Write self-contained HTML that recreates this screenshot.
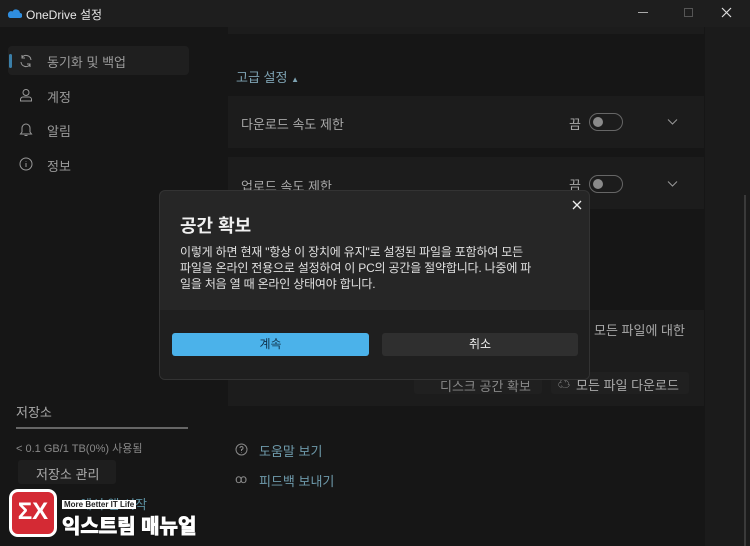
<!DOCTYPE html>
<html><head><meta charset="utf-8"><style>
*{margin:0;padding:0;box-sizing:border-box}
body{width:750px;height:546px;overflow:hidden;background:#161616;font-family:"Liberation Sans","Noto Sans CJK KR",sans-serif;color:#9a9a9a;position:relative}
.a{position:absolute}
.t{font-size:13px;white-space:nowrap}
</style></head><body>
<div class="a" style="left:0;top:0;width:750px;height:27px;background:#1e1e1e"></div>
<svg class="a" style="left:6px;top:7px" width="16" height="12" viewBox="0 0 16 12"><path d="M4 11h10a2.5 2.5 0 0 0 0-5 4 4 0 0 0-7.5-1.5A3.2 3.2 0 0 0 2 8a3 3 0 0 0 2 3z" fill="#2f8ee0"/></svg>
<div class="a t" style="left:26px;top:6px;font-size:12px;color:#e8e8e8">OneDrive 설정</div>
<div class="a" style="left:638px;top:12px;width:10px;height:1px;background:#aaa"></div>
<div class="a" style="left:684px;top:8px;width:9px;height:9px;border:1px solid #555"></div>
<svg class="a" style="left:721px;top:7px" width="11" height="11"><path d="M1 1l9 9M10 1l-9 9" stroke="#ddd" stroke-width="1.2"/></svg>
<div class="a" style="left:705px;top:27px;width:45px;height:519px;background:#1b1b1b"></div>
<div class="a" style="left:744px;top:195px;width:2px;height:351px;background:#3a3a3a"></div>
<div class="a" style="left:8px;top:46px;width:181px;height:29px;background:#1f1f1f;border-radius:4px"></div>
<div class="a" style="left:9px;top:54px;width:3px;height:14px;background:#3b7fa8;border-radius:2px"></div>
<svg class="a" style="left:19px;top:54px" width="14" height="14" viewBox="0 0 14 14" fill="none" stroke="#999"><path d="M12 6A5 5 0 0 0 3 3.5M3 1v3h3M2 8a5 5 0 0 0 9 2.5M11 13v-3H8"/></svg>
<div class="a t" style="left:47px;top:52px">동기화 및 백업</div>
<svg class="a" style="left:19px;top:88px" width="14" height="14" viewBox="0 0 14 14" fill="none" stroke="#999"><circle cx="7" cy="4.5" r="3"/><path d="M1.5 13v-1.5a2.5 2.5 0 0 1 2.5-2.5h6a2.5 2.5 0 0 1 2.5 2.5V13z"/></svg>
<div class="a t" style="left:47px;top:87px">계정</div>
<svg class="a" style="left:19px;top:122px" width="14" height="15" viewBox="0 0 14 15" fill="none" stroke="#999"><path d="M3 10V6a4 4 0 0 1 8 0v4l1.5 2h-11zM5.5 13.5h3"/></svg>
<div class="a t" style="left:47px;top:121px">알림</div>
<svg class="a" style="left:19px;top:157px" width="14" height="14" viewBox="0 0 14 14" fill="none" stroke="#999"><circle cx="7" cy="7" r="6"/><path d="M7 6v4M7 4v.5"/></svg>
<div class="a t" style="left:47px;top:156px">정보</div>
<div class="a t" style="left:16px;top:402px;color:#aaa">저장소</div>
<div class="a" style="left:16px;top:427px;width:172px;height:2px;background:#666"></div>
<div class="a t" style="left:16px;top:440px;font-size:11px;color:#888">&lt; 0.1 GB/1 TB(0%) 사용됨</div>
<div class="a" style="left:18px;top:460px;width:98px;height:24px;background:#1e1e1e;border-radius:3px"></div>
<div class="a t" style="left:36px;top:464px;color:#aaa">저장소 관리</div>
<div class="a t" style="left:80px;top:494px;color:#5b8fa0">에서 앱 시작</div>
<div class="a" style="left:228px;top:27px;width:476px;height:7px;background:#1c1c1c"></div>
<div class="a t" style="left:236px;top:67px;color:#7ea3b3">고급 설정 <span style="font-size:8px">▲</span></div>
<div class="a" style="left:228px;top:96px;width:476px;height:52px;background:#1c1c1c"></div>
<div class="a t" style="left:241px;top:114px;color:#a8a8a8">다운로드 속도 제한</div>
<div class="a" style="left:228px;top:157px;width:476px;height:52px;background:#1c1c1c"></div>
<div class="a t" style="left:241px;top:176px;color:#a8a8a8">업로드 속도 제한</div>
<div class="a t" style="left:569px;top:114px;color:#a8a8a8">끔</div>
<div class="a t" style="left:569px;top:175px;color:#a8a8a8">끔</div>
<div class="a" style="left:589px;top:113px;width:34px;height:18px;border:1px solid #666;border-radius:9px"></div>
<div class="a" style="left:593px;top:117px;width:10px;height:10px;border-radius:50%;background:#8a8a8a"></div>
<div class="a" style="left:589px;top:175px;width:34px;height:18px;border:1px solid #666;border-radius:9px"></div>
<div class="a" style="left:593px;top:179px;width:10px;height:10px;border-radius:50%;background:#8a8a8a"></div>
<svg class="a" style="left:667px;top:118px" width="11" height="8"><path d="M1 1.5l4.5 4.5L10 1.5" stroke="#999" fill="none"/></svg>
<svg class="a" style="left:667px;top:180px" width="11" height="8"><path d="M1 1.5l4.5 4.5L10 1.5" stroke="#999" fill="none"/></svg>
<div class="a" style="left:228px;top:310px;width:476px;height:96px;background:#1c1c1c"></div>
<div class="a t" style="left:594px;top:320px;color:#a8a8a8">모든 파일에 대한</div>
<div class="a" style="left:414px;top:372px;width:128px;height:22px;background:#202020;border-radius:3px"></div>
<div class="a t" style="left:440px;top:376px;color:#888">디스크 공간 확보</div>
<div class="a" style="left:551px;top:372px;width:138px;height:22px;background:#202020;border-radius:3px"></div>
<div class="a t" style="left:576px;top:375px;color:#aaa">모든 파일 다운로드</div>
<div class="a t" style="left:558px;top:375px;color:#aaa;font-size:12px">☁</div>
<svg class="a" style="left:235px;top:443px" width="13" height="13" viewBox="0 0 13 13" fill="none" stroke="#888"><circle cx="6.5" cy="6.5" r="5.5"/><path d="M5 5a1.5 1.5 0 1 1 1.5 1.5V8M6.5 9.5v.5"/></svg>
<div class="a t" style="left:259px;top:441px;color:#6e9aab">도움말 보기</div>
<div class="a t" style="left:235px;top:472px;color:#888;font-size:12px">ꝏ</div>
<div class="a t" style="left:259px;top:471px;color:#6e9aab">피드백 보내기</div>
<div class="a" style="left:159px;top:190px;width:431px;height:190px;background:#262626;border:1px solid #333;border-radius:6px;overflow:hidden">
<div class="a" style="left:0;top:119px;width:431px;height:71px;background:#1f1f1f"></div>
</div>
<svg class="a" style="left:572px;top:200px" width="10" height="10"><path d="M1 1l8 8M9 1l-8 8" stroke="#eee" stroke-width="1.3"/></svg>
<div class="a t" style="left:180px;top:212px;font-size:18px;font-weight:bold;color:#f0f0f0">공간 확보</div>
<div class="a" style="left:180px;top:244px;width:410px;font-size:12px;line-height:16px;letter-spacing:-0.2px;color:#e0e0e0;white-space:nowrap">이렇게 하면 현재 "항상 이 장치에 유지"로 설정된 파일을 포함하여 모든<br>파일을 온라인 전용으로 설정하여 이 PC의 공간을 절약합니다. 나중에 파<br>일을 처음 열 때 온라인 상태여야 합니다.</div>
<div class="a" style="left:172px;top:333px;width:197px;height:23px;background:#4bb2ea;border-radius:3px;text-align:center;font-size:12px;line-height:23px;color:#10314a">계속</div>
<div class="a" style="left:382px;top:333px;width:196px;height:23px;background:#2f2f2f;border-radius:3px;text-align:center;font-size:12px;line-height:23px;color:#eee">취소</div>
<div class="a" style="left:9px;top:489px;width:48px;height:48px;background:#d42a34;border:3px solid #fff;border-radius:9px;color:#fff;font-weight:bold;font-size:24px;line-height:40px;text-align:center">ΣX</div>
<div class="a t" style="left:62px;top:500px;font-size:8px;font-weight:bold;color:#222;background:#fff;padding:0 2px">More Better IT Life</div>
<div class="a t" style="left:62px;top:510px;font-size:20px;font-weight:bold;color:#fff;-webkit-text-stroke:1px #fff;text-shadow:0 0 2px #000">익스트림 매뉴얼</div>
</body></html>
